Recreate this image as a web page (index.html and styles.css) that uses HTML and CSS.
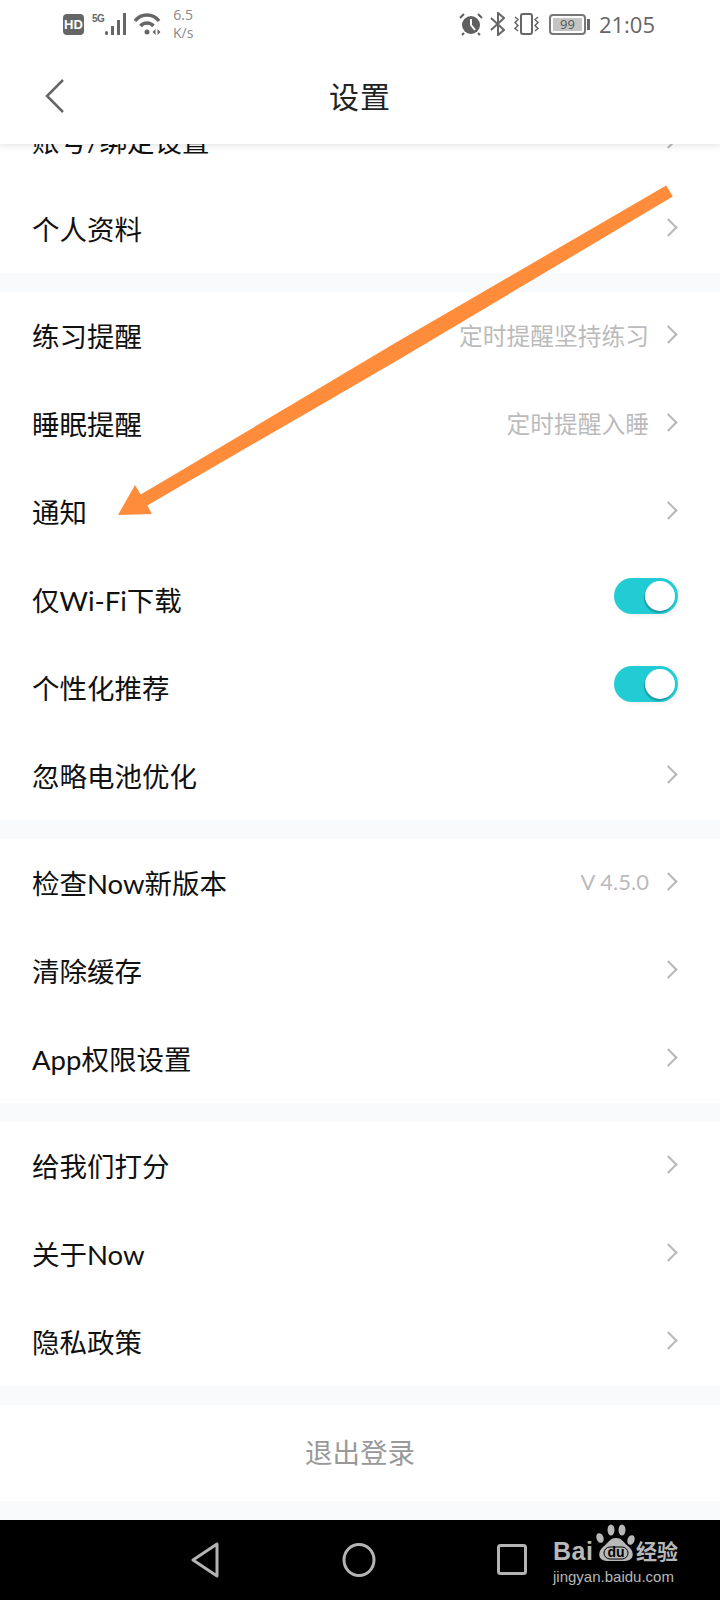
FILE: index.html
```html
<!DOCTYPE html>
<html lang="zh-CN">
<head>
    <meta charset="UTF-8">
    <meta name="viewport" content="width=device-width, initial-scale=1.0">
    <title>设置</title>
    <link rel="stylesheet" href="styles.css">
</head>

<body>
    <div class="screen">
        <div class="top">
            <div class="status">
                <div class="status-left">
                    <span class="hd">HD</span>
                    <svg class="signal" width="38" height="24" viewBox="0 0 38 24">
                        <text x="0" y="10" class="five-g">5G</text>
                        <rect x="13" y="19" width="3" height="4" rx="1.5" fill="#666"/>
                        <rect x="19" y="14" width="3" height="9" fill="#666"/>
                        <rect x="25" y="8" width="3" height="15" fill="#666"/>
                        <rect x="31" y="1" width="3" height="22" fill="#666"/>
                    </svg>
                    <svg class="wifi" width="28" height="24" viewBox="0 0 28 24">
                        <path d="M1 9C7 1 19 1 25 9" fill="none" stroke="#666" stroke-width="3.500"/>
                        <path d="M6.500 14C10 10 16 10 19.500 14" fill="none" stroke="#666" stroke-width="3.500"/>
                        <circle cx="13" cy="20" r="2.500" fill="#666"/>
                        <path d="M18.500 20l3-3v6zM26.500 20l-3-3v6z" fill="#666"/>
                    </svg>
                    <div class="speed"><span>6.5</span><span>K/s</span></div>
                </div>
                <div class="status-right">
                    <svg class="alarm" width="24" height="24" viewBox="0 0 24 24">
                        <circle cx="12" cy="13" r="9" fill="#5f5f5f"/>
                        <path d="M12 7v6l4 5" fill="none" stroke="#fff" stroke-width="2"/>
                        <path d="M1 6l4-4M23 6l-4-4M5 21l-2 2M19 21l2 2" stroke="#5f5f5f" stroke-width="2"/>
                    </svg>
                    <svg class="bt" width="15" height="24" viewBox="0 0 15 24">
                        <path d="M1 6l13 12-6 5V1l6 5L1 18" fill="none" stroke="#666" stroke-width="2"/>
                    </svg>
                    <svg class="vibrate" width="27" height="24" viewBox="0 0 27 24">
                        <rect x="8" y="2" width="11" height="20" rx="2" fill="none" stroke="#666" stroke-width="2"/>
                        <path d="M2 5l3 2.500-3 3 3 3-3 3 3 2.500M25 5l-3 2.500 3 3-3 3 3 3-3 2.500" fill="none" stroke="#666" stroke-width="1.500"/>
                    </svg>
                    <div class="battery">
                        <div class="battery-body"><span>99</span></div>
                        <div class="battery-tip"></div>
                    </div>
                    <span class="time">21:05</span>
                </div>
            </div>
            <div class="bar">
                <svg class="back" width="20" height="34" viewBox="0 0 20 34">
                    <path d="M18 1L2 17l16 16" fill="none" stroke="#666" stroke-width="2.500"/>
                </svg>
                <p class="title">设置</p>
            </div>
        </div>

        <div class="content">
            <div class="group">
                <div class="row"><span class="name">账号/绑定设置</span><i class="arrow"></i></div>
                <div class="row"><span class="name">个人资料</span><i class="arrow"></i></div>
            </div>
            <div class="group">
                <div class="row"><span class="name">练习提醒</span><span class="value">定时提醒坚持练习</span><i class="arrow"></i></div>
                <div class="row"><span class="name">睡眠提醒</span><span class="value">定时提醒入睡</span><i class="arrow"></i></div>
                <div class="row"><span class="name">通知</span><i class="arrow"></i></div>
                <div class="row"><span class="name">仅Wi-Fi下载</span><span class="toggle"><i class="knob"></i></span></div>
                <div class="row"><span class="name">个性化推荐</span><span class="toggle"><i class="knob"></i></span></div>
                <div class="row"><span class="name">忽略电池优化</span><i class="arrow"></i></div>
            </div>
            <div class="group">
                <div class="row"><span class="name">检查Now新版本</span><span class="value version">V 4.5.0</span><i class="arrow"></i></div>
                <div class="row"><span class="name">清除缓存</span><i class="arrow"></i></div>
                <div class="row"><span class="name">App权限设置</span><i class="arrow"></i></div>
            </div>
            <div class="group">
                <div class="row"><span class="name">给我们打分</span><i class="arrow"></i></div>
                <div class="row"><span class="name">关于Now</span><i class="arrow"></i></div>
                <div class="row"><span class="name">隐私政策</span><i class="arrow"></i></div>
            </div>
            <div class="group logout">退出登录</div>
        </div>

        <div class="nav">
            <svg width="30" height="36" viewBox="0 0 30 36">
                <path d="M27 2L3 18l24 16z" fill="none" stroke="#b4b4b4" stroke-width="3" stroke-linejoin="round"/>
            </svg>
            <svg width="34" height="36" viewBox="0 0 34 36">
                <ellipse cx="17" cy="18" rx="15" ry="15.500" fill="none" stroke="#b4b4b4" stroke-width="3"/>
            </svg>
            <svg width="30" height="32" viewBox="0 0 30 32">
                <rect x="1.500" y="1.500" width="27" height="28" rx="2" fill="none" stroke="#b4b4b4" stroke-width="3"/>
            </svg>
        </div>

        <!-- orange marker drawn over the screenshot -->
        <svg class="marker" width="720" height="600" viewBox="0 0 720 600">
            <polygon points="666.200,185.400 396,342.600 306.200,396 173.700,475 140.700,494.400 135,485 118,515 152,514 147.300,505.600 180.300,486.200 313.800,408.900 404,356.400 672.800,196.600" fill="#ff8c3a"/>
        </svg>

        <!-- watermark -->
        <div class="logo">
            <div class="logo-top">
                <span class="bai">Bai</span>
                <svg class="paw" width="40" height="42" viewBox="0 0 40 42">
                    <ellipse cx="4" cy="15" rx="3.500" ry="5" fill="#b8b8b8" transform="rotate(-20 4 15)"/>
                    <ellipse cx="15" cy="7" rx="3.500" ry="5.500" fill="#b8b8b8"/>
                    <ellipse cx="26" cy="7" rx="3.500" ry="5.500" fill="#b8b8b8"/>
                    <ellipse cx="35" cy="17" rx="3.500" ry="5" fill="#b8b8b8" transform="rotate(20 35 17)"/>
                    <path d="M20 15C14 15 12 20 7 24C1 29 2 38 11 38H29C38 38 39 29 33 24C28 20 26 15 20 15z" fill="#b8b8b8"/>
                    <rect x="8" y="24" width="24" height="12" rx="6" fill="none" stroke="#000"/>
                    <text x="20" y="34" class="du">du</text>
                </svg>
                <span class="jy">经验</span>
            </div>
            <p class="logo-url">jingyan.baidu.com</p>
        </div>
    </div>
</body>

</html>
```

FILE: styles.css
```css
* {
    margin: 0;
    padding: 0;
    box-sizing: border-box;
}

body {
    background-color: #fff;
    font-family: Lato, "Noto Sans CJK SC", sans-serif;
}

.screen {
    position: relative;
    width: 720px;
    height: 1600px;
    display: flex;
    flex-direction: column;
    overflow: hidden;
    background-color: #f9fafc;
}

.top {
    position: relative;
    z-index: 2;
    height: 144px;
    flex-shrink: 0;
    background-color: #fff;
    box-shadow: 0 1px 8px rgba(0, 0, 0, .12);
}

.status {
    height: 48px;
    display: flex;
    justify-content: space-between;
    align-items: center;
    padding: 0 65px 0 63px;
}

.status-left,
.status-right {
    display: flex;
    align-items: center;
}

.hd {
    width: 21px;
    height: 21px;
    border-radius: 4px;
    background-color: #666;
    color: #fff;
    font-size: 13px;
    font-weight: bold;
    line-height: 21px;
    text-align: center;
    font-family: "Liberation Sans", sans-serif;
}

.signal {
    margin-left: 8px;
}

.five-g {
    font-family: "Liberation Sans", sans-serif;
    font-size: 10px;
    font-weight: bold;
    letter-spacing: -.5px;
    fill: #666;
}

.wifi {
    margin-left: 4px;
}

.speed {
    display: flex;
    flex-direction: column;
    margin-left: 11px;
    color: #888;
    font-size: 14px;
    line-height: 18px;
    text-align: center;
    font-family: "Open Sans", sans-serif;
}

.bt {
    margin-left: 7px;
}

.vibrate {
    margin-left: 8px;
}

.battery {
    display: flex;
    align-items: center;
    margin-left: 9px;
}

.battery-body {
    width: 37px;
    height: 21px;
    border: 2px solid #777;
    border-radius: 4px;
    padding: 2px;
}

.battery-body span {
    display: block;
    height: 13px;
    background-color: #c4c4c4;
    color: #555;
    font-size: 13px;
    line-height: 13px;
    text-align: center;
    font-family: "Open Sans", sans-serif;
}

.battery-tip {
    width: 3px;
    height: 11px;
    margin-left: 1px;
    background-color: #666;
}

.time {
    margin-left: 9px;
    color: #666;
    font-size: 22px;
    font-family: "Open Sans", sans-serif;
}

.bar {
    position: relative;
    height: 96px;
    display: flex;
    align-items: center;
    justify-content: center;
}

.back {
    position: absolute;
    left: 45px;
    top: 31px;
}

.title {
    color: #222;
    font-size: 30px;
    line-height: 96px;
    letter-spacing: 1px;
}

.content {
    flex: 1;
    margin-top: -47px;
    display: flex;
    flex-direction: column;
    gap: 19px;
}

.group {
    background-color: #fff;
}

.row {
    height: 88px;
    display: flex;
    align-items: center;
    padding: 0 42px 3px 32px;
    color: #111;
    font-size: 27.500px;
}

.name {
    flex: 1;
}

.value {
    color: #bbb;
    font-size: 23.750px;
    margin-right: 13px;
}

.version {
    font-size: 22px;
}

.arrow {
    display: block;
    width: 13px;
    height: 13px;
    margin-right: 3px;
    border-top: 2px solid #b8b8b8;
    border-right: 2px solid #b8b8b8;
    transform: rotate(45deg);
}

.toggle {
    display: block;
    width: 64px;
    height: 36px;
    margin-bottom: 5px;
    padding: 3px 3px 3px 31px;
    border-radius: 18px;
    background-color: #22ccd4;
    box-shadow: 2px 2px 4px rgba(0, 0, 0, .06);
}

.knob {
    display: block;
    width: 30px;
    height: 30px;
    border-radius: 50%;
    background-color: #fff;
    box-shadow: -1px 2px 1px rgba(30, 120, 130, .6);
}

.logout {
    height: 96px;
    color: #999;
    font-size: 27.500px;
    line-height: 96px;
    text-align: center;
}

.nav {
    height: 80px;
    flex-shrink: 0;
    display: flex;
    align-items: center;
    justify-content: center;
    gap: 121.500px;
    padding-right: 3px;
    background-color: #000;
}

.marker {
    position: absolute;
    left: 0;
    top: 0;
    z-index: 3;
}

.logo {
    position: absolute;
    left: 553px;
    top: 1523px;
    z-index: 3;
    width: 128px;
    color: #b8b8b8;
}

.logo-top {
    display: flex;
    align-items: flex-end;
    height: 42px;
}

.bai {
    width: 43px;
    height: 24px;
    margin-bottom: 2px;
    font-size: 25px;
    font-weight: bold;
    letter-spacing: .5px;
    line-height: 24px;
    white-space: nowrap;
    font-family: "Liberation Sans", sans-serif;
}

.paw {
    flex-shrink: 0;
}

.du {
    fill: #000;
    font-size: 14px;
    font-weight: bold;
    text-anchor: middle;
    font-family: "Liberation Sans", sans-serif;
}

.jy {
    height: 26px;
    font-size: 21px;
    line-height: 24px;
    font-weight: bold;
    white-space: nowrap;
}

.logo-url {
    margin-top: 3px;
    font-size: 15px;
    line-height: 17px;
    white-space: nowrap;
    font-family: "Liberation Sans", sans-serif;
}
```
